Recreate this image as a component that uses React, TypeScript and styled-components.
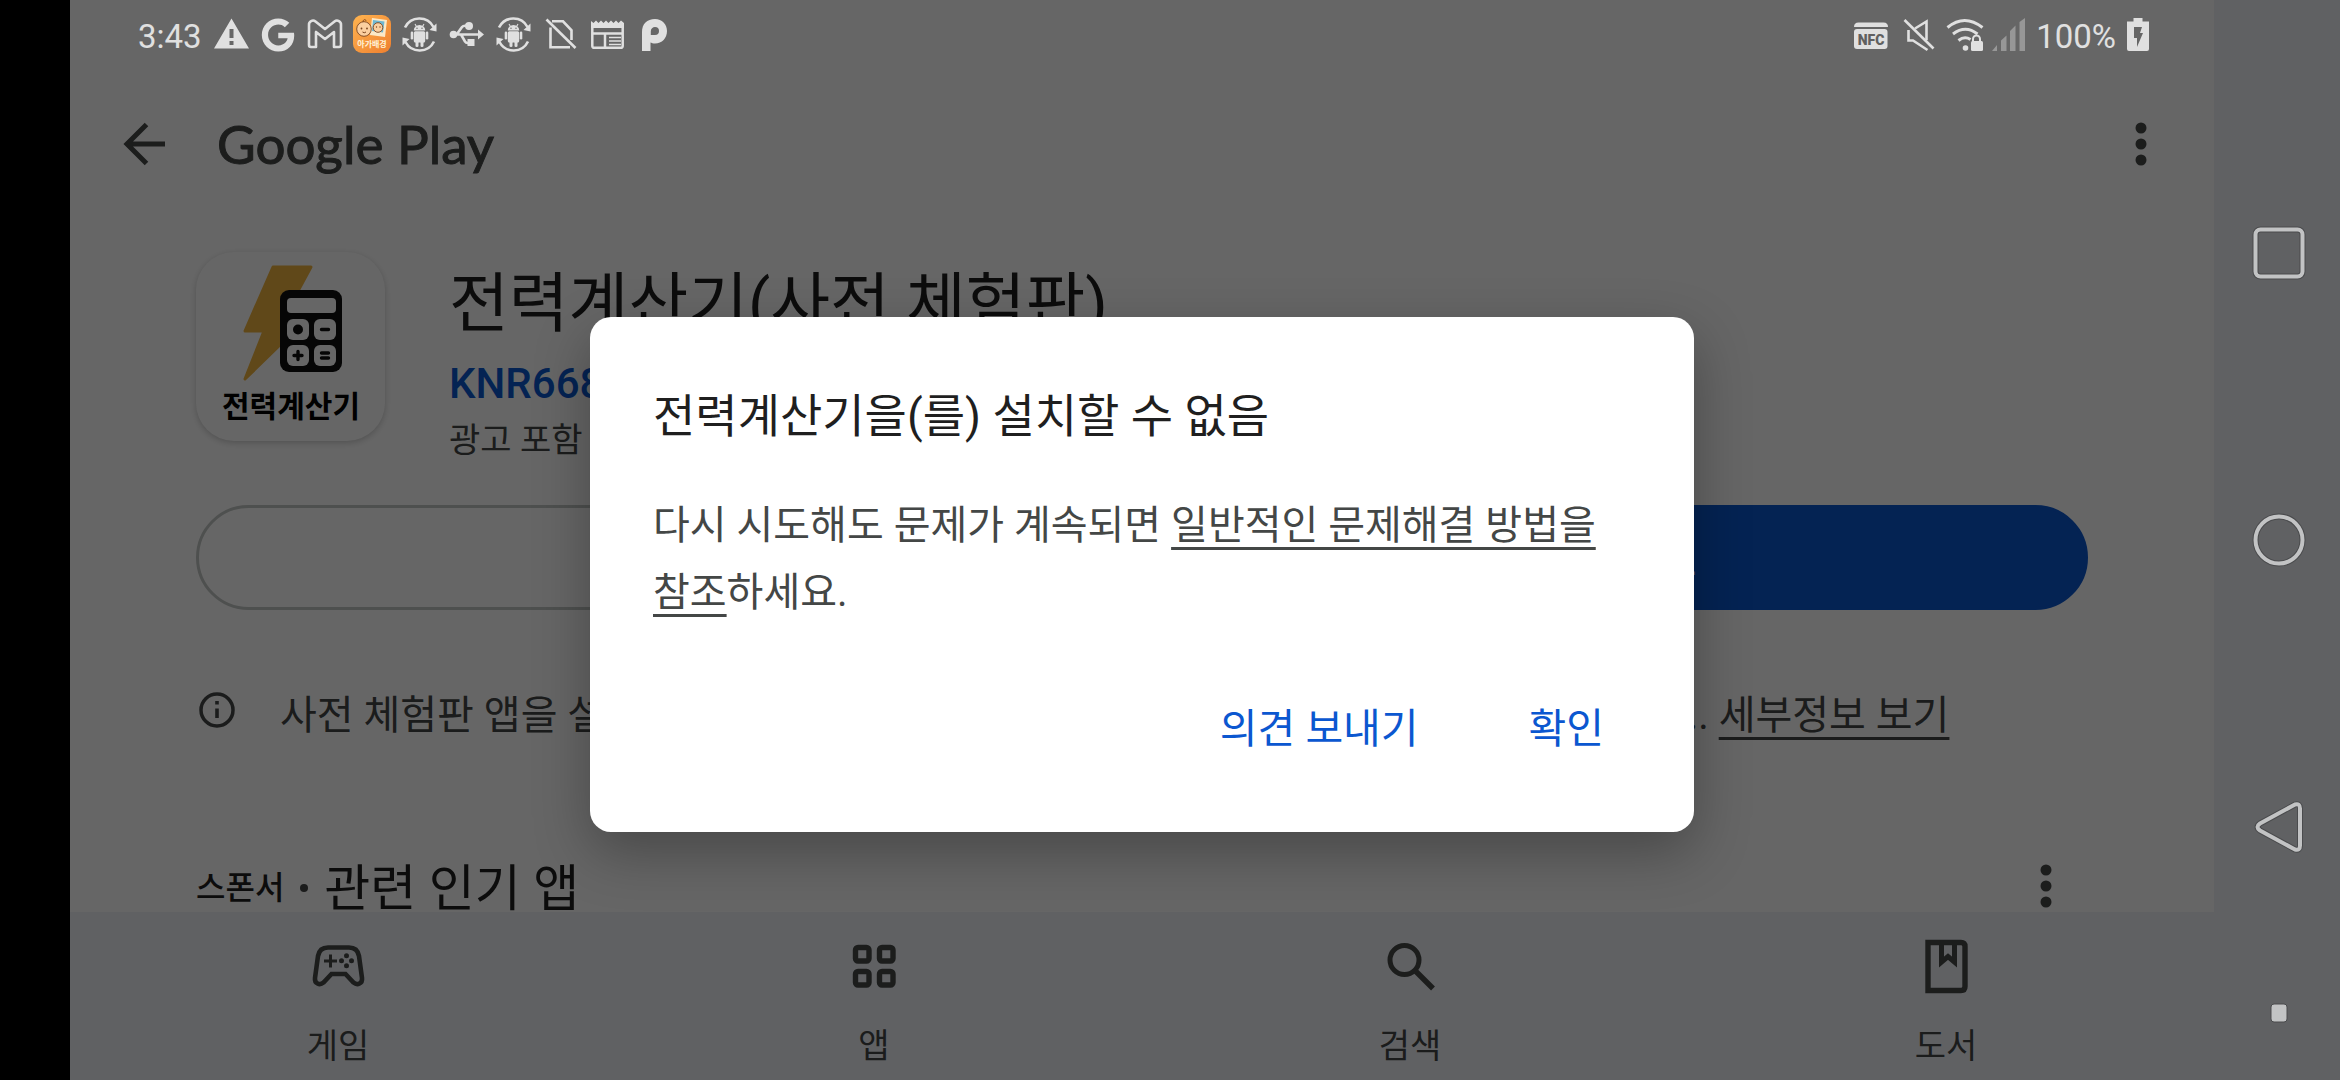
import React from "react";
import styled, { createGlobalStyle } from "styled-components";
import { FaGoogle } from "react-icons/fa";

const sans = `Roboto, "Noto Sans CJK KR", sans-serif`;
const kr = `"Noto Sans CJK KR", sans-serif`;
const light = "#e0e0e0";
const ink = "#444746";
const strong = "#1f1f1f";
const blue = "#0b57d0";
const key = "#c2c3c4";

const GlobalStyle = createGlobalStyle`
  *, *::before, *::after { box-sizing: border-box; }
  body { margin: 0; background: #000; font-family: ${sans}; word-break: keep-all; }
  button { border: 0; padding: 0; margin: 0; background: none; font-family: inherit; color: inherit; cursor: pointer; }
  h1, h2, p { margin: 0; font-weight: 400; }
  svg { display: block; flex: none; }
`;

const Screen = styled.div`
  position: relative;
  display: grid;
  grid-template-columns: 70px minmax(0, 1fr) 126px;
  height: 100vh;
  min-height: 900px;
  overflow: hidden;
`;

const Cutout = styled.div`
  background: #000;
`;

const AppArea = styled.div`
  display: flex;
  flex-direction: column;
  min-height: 0;
  background: #fff;
`;

const StatusBar = styled.header`
  position: relative;
  z-index: 2;
  flex: none;
  display: flex;
  align-items: center;
  justify-content: space-between;
  height: 69px;
  padding: 0 65px 0 66px;
  color: ${light};
`;

const StatusGroup = styled.div<{ $gap: number }>`
  display: flex;
  align-items: center;
  gap: ${(p) => p.$gap}px;
`;

const StatusText = styled.span`
  font-size: 33px;
  line-height: 40px;
  padding: 4px 2px 0;
`;

const TopBar = styled.div`
  flex: none;
  display: flex;
  align-items: center;
  height: 150px;
  padding: 0 42px;
  color: #464948;
`;

const IconButton = styled.button`
  display: grid;
  place-items: center;
  width: 63px;
  height: 63px;
`;

const Wordmark = styled.span`
  flex: 1;
  margin-left: 42px;
  font-family: Lato, sans-serif;
  font-size: 53px;
  line-height: 62px;
  -webkit-text-stroke: 1px currentColor;
`;

const Content = styled.main`
  flex: 1;
  min-height: 0;
  overflow: hidden;
  padding: 33px 126px 0;
`;

const AppHeader = styled.section`
  display: flex;
  align-items: flex-start;
  gap: 64px;
`;

const AppTile = styled.div`
  width: 189px;
  height: 189px;
  border-radius: 38px;
  background: #fff;
  box-shadow: 0 2px 6px rgba(0, 0, 0, 0.2);
`;

const AppMeta = styled.div`
  display: flex;
  flex-direction: column;
  padding-top: 8px;
  white-space: nowrap;
`;

const AppTitle = styled.h1`
  font-size: 65px;
  line-height: 88px;
  color: ${strong};
`;

const Developer = styled.a`
  font-size: 42px;
  font-weight: 500;
  line-height: 72px;
  color: ${blue};
  text-decoration: none;
`;

const Note = styled.p`
  font-size: 34px;
  line-height: 40px;
  color: ${ink};
`;

const Actions = styled.div`
  display: flex;
  gap: 24px;
  margin-top: 45px;
`;

const ActionButton = styled.button<{ $filled?: boolean }>`
  flex: 1;
  height: 105px;
  border-radius: 53px;
  border: 3px solid ${(p) => (p.$filled ? blue : "#c4c7c5")};
  background: ${(p) => (p.$filled ? blue : "transparent")};
  color: ${(p) => (p.$filled ? "#fff" : blue)};
  font-size: 41px;
  font-weight: 500;
`;

const InfoRow = styled.div`
  display: flex;
  align-items: flex-start;
  gap: 42px;
  margin-top: 72px;
  color: ${ink};
`;

const InfoText = styled.p`
  font-size: 40px;
  line-height: 67px;
  white-space: nowrap;
`;

const TextLink = styled.a`
  color: inherit;
  text-decoration: underline;
  text-decoration-thickness: 3px;
  text-underline-offset: 8px;
`;

const SectionHead = styled.div`
  display: flex;
  align-items: flex-start;
  margin-top: 115px;
  height: 48px;
  color: ${strong};
`;

const Sponsor = styled.span`
  font-size: 32px;
  font-weight: 500;
  line-height: 48px;
`;

const Bullet = styled.i`
  align-self: center;
  width: 8px;
  height: 8px;
  margin: 0 16px;
  border-radius: 50%;
  background: ${ink};
`;

const SectionTitle = styled.h2`
  flex: 1;
  align-self: flex-end;
  font-size: 50px;
  line-height: 46px;
`;

const SectionMore = styled(IconButton)`
  height: 44px;
  margin-right: 11px;
  color: #464948;
`;

const BottomNav = styled.nav`
  flex: none;
  display: flex;
  height: 168px;
  background: #f0f3f8;
  color: #464948;
`;

const NavItem = styled.button`
  flex: 1;
  display: flex;
  flex-direction: column;
  align-items: center;
  padding-top: 23px;
  font-size: 34px;
  line-height: 48px;
  gap: 24px;
  color: ${ink};
`;

const SystemNav = styled.nav`
  position: relative;
  z-index: 2;
  display: flex;
  flex-direction: column;
  padding: 109px 0 24px 3px;
  background: #606163;
`;

const SystemKey = styled.button<{ $small?: boolean }>`
  flex: ${(p) => (p.$small ? "0 0 86px" : "1")};
  display: grid;
  place-items: center;
`;

const Scrim = styled.div`
  position: absolute;
  inset: 0;
  z-index: 1;
  background: rgba(0, 0, 0, 0.6);
`;

const DialogLayer = styled.div`
  position: absolute;
  inset: 0;
  z-index: 3;
  display: grid;
  place-items: center;
  padding: 69px 126px 0 70px;
  pointer-events: none;
`;

const Dialog = styled.div`
  width: 1104px;
  max-width: 90%;
  padding: 64px 63px 57px;
  border-radius: 21px;
  background: #fff;
  box-shadow: 0 20px 56px rgba(0, 0, 0, 0.3);
  pointer-events: auto;
`;

const DialogTitle = styled.h2`
  font-size: 46px;
  line-height: 70px;
  color: ${strong};
`;

const DialogBody = styled.p`
  margin-top: 41px;
  font-size: 40px;
  line-height: 67px;
  color: ${ink};
`;

const DialogActions = styled.div`
  display: flex;
  justify-content: flex-end;
  gap: 56px;
  margin-top: 49px;
`;

const DialogButton = styled.button`
  height: 100px;
  padding: 0 27px;
  font-size: 41px;
  color: ${blue};
`;

const Glyph = ({ w = 40, children }: { w?: number; children: React.ReactNode }) => (
  <svg width={w} height={39} viewBox={`0 0 ${w} 39`} fill="currentColor" aria-hidden>
    {children}
  </svg>
);

const Warning = () => (
  <Glyph>
    <path fillRule="evenodd" d="M20.500 3.500 38 33.500H3zM18.500 14v9h4v-9zm0 12v4h4v-4z" />
  </Glyph>
);

const GoogleSlot = styled.span`
  display: grid;
  place-items: center;
  width: 40px;
  height: 39px;
`;

const GoogleMark = () => (
  <GoogleSlot>
    <FaGoogle size={34} />
  </GoogleSlot>
);

const Mail = () => (
  <Glyph>
    <path
      d="M4 10a4 4 0 0 1 6.500-3.500L20 14l9.500-7.500A4 4 0 0 1 36 10v20a2 2 0 0 1-2 2h-5V17l-9 7-9-7v15H6a2 2 0 0 1-2-2z"
      fill="none"
      stroke="currentColor"
      strokeWidth="2.600"
      strokeLinejoin="round"
    />
  </Glyph>
);

const BabyApp = () => (
  <Glyph>
    <defs>
      <linearGradient id="baby" x1="0" y1="0" x2="1" y2="1">
        <stop offset="0" stopColor="#ffb450" />
        <stop offset="1" stopColor="#ee7f2f" />
      </linearGradient>
    </defs>
    <rect x="1" y="0" width="38" height="38" rx="9" fill="url(#baby)" />
    <path d="M20 3l15 2-2 17-15-2z" fill="#fbe9c8" />
    <path d="M21 5l11.500 1.500-1.500 11-11-1.500z" fill="#6fb8d3" />
    <g fill="#fbcf9f" stroke="#7a4520" strokeWidth="0.900">
      <circle cx="26" cy="12.500" r="4.800" />
      <circle cx="12" cy="14" r="7.300" />
      <path d="M11 7c0-3 3-3 3-1" fill="none" />
    </g>
    <g fill="#7a4520">
      <circle cx="9.500" cy="13.500" r="0.900" />
      <circle cx="15" cy="13.500" r="0.900" />
      <circle cx="24.500" cy="12" r="0.700" />
      <circle cx="28" cy="12" r="0.700" />
    </g>
    <path d="M10.500 17q1.800 1.500 3.500 0" fill="none" stroke="#7a4520" />
    <text x="20" y="32" textAnchor="middle" fontFamily={kr} fontSize="8" fontWeight="700" fill="#fff3d8">
      아가배경
    </text>
  </Glyph>
);

const AndroidSync = () => (
  <Glyph>
    <g fill="none" stroke="currentColor" strokeWidth="2.600">
      <path d="M6 12.500A16 16 0 0 1 34.500 12" />
      <path d="M35 26.500A16 16 0 0 1 6.500 27" />
    </g>
    <path d="M37.500 8.500v8l-7-1.500zM3.500 30.500v-8l7 1.500z" />
    <path d="M14.800 15.500a5.700 5.500 0 0 1 11.400 0z" />
    <path d="M16 9l1.800 3m7.200-3-1.800 3" stroke="currentColor" strokeWidth="1.100" />
    <rect x="14.800" y="16.200" width="11.400" height="11.300" rx="1.500" />
    <rect x="11.700" y="16.500" width="2.500" height="8" rx="1.200" />
    <rect x="26.800" y="16.500" width="2.500" height="8" rx="1.200" />
    <rect x="16.500" y="26" width="3" height="6" rx="1.300" />
    <rect x="21.500" y="26" width="3" height="6" rx="1.300" />
    <circle cx="18" cy="13.200" r="0.700" fill="#666" />
    <circle cx="23" cy="13.200" r="0.700" fill="#666" />
  </Glyph>
);

const Usb = () => (
  <Glyph>
    <circle cx="7.500" cy="19.500" r="3.800" />
    <circle cx="23" cy="11" r="4" />
    <rect x="21.500" y="24" width="7" height="7" />
    <path d="M32 14.500v10l6-5z" />
    <path
      d="M8 19.500h26M11 19l5-7q1-1.300 3-1.300h4M15 19.500l4 7q1 1.500 2.500 1.500h2"
      fill="none"
      stroke="currentColor"
      strokeWidth="2.600"
    />
  </Glyph>
);

const NoSim = () => (
  <Glyph>
    <g fill="none" stroke="currentColor" strokeWidth="2.600">
      <path d="M6.500 4.500 35.500 33" />
      <path d="M10.500 12.500v19.700H30M12 6.300h11l8.500 9V25" />
    </g>
  </Glyph>
);

const News = () => (
  <Glyph>
    <path d="M4 6l2.500 2L9 5.500 11.500 8 14 5.500 16.500 8 19 5.500 21.500 8 24 5.500 26.500 8 29 5.500 31.500 8 34 5.500 37 8v5H4z" />
    <path d="M5.300 12v19a1.800 1.800 0 0 0 1.800 1.800h26.800a1.800 1.800 0 0 0 1.800-1.800V12M5 18.500h30M18 18.500V32" fill="none" stroke="currentColor" strokeWidth="2.500" />
    <path d="M22 22.500h12M22 26h12M22 29.500h12" stroke="currentColor" strokeWidth="1.700" />
  </Glyph>
);

const ParkMark = () => (
  <Glyph>
    <path
      fillRule="evenodd"
      d="M8 36V17C8 9 13 4 21 4c7 0 12 5 12 12s-5 12.500-12 12.500c-2 0-3.500-.5-4.500-1V36zM21 12a4.200 4.200 0 0 0-4.200 4.200v3.800H21a4 4 0 0 0 0-8z"
    />
  </Glyph>
);

const Nfc = () => (
  <Glyph>
    <path d="M3 12q0-4.500 4.500-4.500h25q4.500 0 4.500 4.500z" />
    <rect x="3" y="14" width="33.500" height="20" rx="3" />
    <text x="20" y="29.500" textAnchor="middle" fontFamily="Roboto, sans-serif" fontSize="14" fontWeight="900" fill="#606060">
      NFC
    </text>
  </Glyph>
);

const Mute = () => (
  <Glyph>
    <g fill="none" stroke="currentColor" strokeWidth="2.600">
      <path d="M6.500 5 35.500 33.500" />
      <path d="M17 13.500 28.500 6.500V25M10.500 15v10.500H15L29.500 35" />
    </g>
  </Glyph>
);

const WifiLock = () => (
  <Glyph>
    <g fill="none" stroke="currentColor" strokeWidth="3">
      <path d="M2.500 12.500q17-14 35 0" />
      <path d="M8 19q12.500-9.500 24.500 0" />
      <path d="M13.500 25.500q6-5 12-1" />
      <path d="M28 28v-4a3.500 3.500 0 0 1 7 0v4" strokeWidth="2" />
    </g>
    <circle cx="20.500" cy="33" r="2.800" />
    <rect x="26" y="26" width="12" height="10" rx="1.500" />
  </Glyph>
);

const Signal = () => (
  <Glyph w={33}>
    <path d="M0 36l5-6v6zM9 36V25.500l5.500-5V36zM18 36V16l5.500-5.500V36zM27.500 36V7L33 3v33z" opacity="0.400" />
  </Glyph>
);

const Battery = () => (
  <Glyph w={22}>
    <path fillRule="evenodd" d="M6.500 3h9v3.500H22V34a2 2 0 0 1-2 2H2a2 2 0 0 1-2-2V6.500h6.500zM7 12v11h3v9l6-14h-3l2-6z" />
  </Glyph>
);

const MoreDots = () => (
  <svg width={12} height={44} viewBox="0 0 12 44" fill="currentColor" aria-hidden>
    <circle cx="6" cy="6" r="5.500" />
    <circle cx="6" cy="22" r="5.500" />
    <circle cx="6" cy="38" r="5.500" />
  </svg>
);

const BackArrow = () => (
  <svg width={44} height={44} viewBox="0 0 44 44" fill="none" stroke="currentColor" strokeWidth="5" aria-hidden>
    <path d="M43 22H5M24.500 2.500 5 22l19.500 19.500" />
  </svg>
);

const CalculatorArt = () => (
  <svg width={189} height={189} viewBox="0 0 189 189" aria-hidden>
    <path
      d="M77 15h38L95 52l-8 38-38 37 19-48H49z"
      fill="#f0b440"
      stroke="#f0b440"
      strokeWidth="3"
      strokeLinejoin="round"
    />
    <rect x="84" y="38" width="62" height="82" rx="9" fill="#111" />
    <g fill="#fff">
      <rect x="91" y="46" width="49" height="15" rx="4" />
      <rect x="91" y="67" width="22" height="21" rx="6" />
      <rect x="118" y="67" width="22" height="21" rx="6" />
      <rect x="91" y="93" width="22" height="21" rx="6" />
      <rect x="118" y="93" width="22" height="21" rx="6" />
    </g>
    <circle cx="102" cy="77.500" r="5" fill="#111" />
    <path d="M125.500 77.500h7M102 99.500v8M98 103.500h8M125.500 101h7M125.500 106h7" stroke="#111" strokeWidth="3.400" strokeLinecap="round" />
    <text x="95" y="165" textAnchor="middle" fontFamily={kr} fontSize="30" fontWeight="700" fill="#000">
      전력계산기
    </text>
  </svg>
);

const InfoIcon = () => (
  <svg width={42} height={56} viewBox="0 0 42 56" fill="none" stroke="currentColor" aria-hidden>
    <circle cx="21" cy="28" r="16" strokeWidth="3.500" />
    <path d="M21 26.500V36M21 19v3.500" strokeWidth="3.600" />
  </svg>
);

const NavSvg = ({ children }: { children: React.ReactNode }) => (
  <svg width={63} height={63} viewBox="0 0 63 63" fill="none" stroke="#464948" strokeWidth="5" aria-hidden>
    {children}
  </svg>
);

const navItems = [
  {
    label: "게임",
    icon: (
      <NavSvg>
        <path d="M21 12.500h21q8.500 0 10 8.500l3 22q.5 4-2.500 5.500t-6-1L38.500 39h-14l-8 8.500q-3 2.500-6 1T8 43l3-22q1.500-8.500 10-8.500z" strokeWidth="4.600" />
        <path d="M23.500 19.500v13M17 26h13" strokeWidth="3" />
        <g fill="#464948" stroke="none">
          <circle cx="39.500" cy="20.800" r="2.500" />
          <circle cx="39.500" cy="30.800" r="2.500" />
          <circle cx="34.500" cy="25.800" r="2.500" />
          <circle cx="44.500" cy="25.800" r="2.500" />
        </g>
      </NavSvg>
    ),
  },
  {
    label: "앱",
    icon: (
      <NavSvg>
        {[12.5, 36.5].map((y) =>
          [12.5, 36.5].map((x) => <rect key={`${x}-${y}`} x={x} y={y} width="13.500" height="13.500" rx="2.500" strokeWidth="5.400" />)
        )}
      </NavSvg>
    ),
  },
  {
    label: "검색",
    icon: (
      <NavSvg>
        <circle cx="25.500" cy="25" r="14.500" />
        <path d="M36 35.500 54 53.500" strokeWidth="5.500" />
      </NavSvg>
    ),
  },
  {
    label: "도서",
    icon: (
      <NavSvg>
        <path d="M13 7.500h33q4 0 4 4v40q0 4-4 4H13z" strokeWidth="5.400" />
        <path d="M26.500 8v19l6.500-5.500 6.500 5.500V8" strokeWidth="5" />
      </NavSvg>
    ),
  },
];

const KeySvg = ({ children }: { children: React.ReactNode }) => (
  <svg width={54} height={54} viewBox="0 0 54 54" fill="none" strokeLinejoin="round" aria-hidden>
    <g stroke="#4a4b4d" strokeWidth="6">{children}</g>
    <g stroke={key} strokeWidth="4">{children}</g>
  </svg>
);

export default function App() {
  return (
    <>
      <GlobalStyle />
      <Screen>
        <Cutout />
        <AppArea>
          <StatusBar>
            <StatusGroup $gap={7}>
              <StatusText>3:43</StatusText>
              <Warning />
              <GoogleMark />
              <Mail />
              <BabyApp />
              <AndroidSync />
              <Usb />
              <AndroidSync />
              <NoSim />
              <News />
              <ParkMark />
            </StatusGroup>
            <StatusGroup $gap={9}>
              <StatusGroup $gap={7}>
                <Nfc />
                <Mute />
                <WifiLock />
                <Signal />
              </StatusGroup>
              <StatusText>100%</StatusText>
              <Battery />
            </StatusGroup>
          </StatusBar>
          <TopBar>
            <IconButton aria-label="뒤로">
              <BackArrow />
            </IconButton>
            <Wordmark>Google Play</Wordmark>
            <IconButton aria-label="옵션 더보기">
              <MoreDots />
            </IconButton>
          </TopBar>
          <Content>
            <AppHeader>
              <AppTile>
                <CalculatorArt />
              </AppTile>
              <AppMeta>
                <AppTitle>전력계산기(사전 체험판)</AppTitle>
                <Developer href="#developer">KNR668</Developer>
                <Note>광고 포함</Note>
              </AppMeta>
            </AppHeader>
            <Actions>
              <ActionButton>제거</ActionButton>
              <ActionButton $filled>업데이트</ActionButton>
            </Actions>
            <InfoRow>
              <InfoIcon />
              <InfoText>
                사전 체험판 앱을 설치하면 앱 사용에 관한 특정 데이터가 수집되어 개발자에게 공유됨... <TextLink href="#details">세부정보 보기</TextLink>
              </InfoText>
            </InfoRow>
            <SectionHead>
              <Sponsor>스폰서</Sponsor>
              <Bullet />
              <SectionTitle>관련 인기 앱</SectionTitle>
              <SectionMore aria-label="더보기">
                <MoreDots />
              </SectionMore>
            </SectionHead>
          </Content>
          <BottomNav>
            {navItems.map((item) => (
              <NavItem key={item.label}>
                {item.icon}
                <span>{item.label}</span>
              </NavItem>
            ))}
          </BottomNav>
        </AppArea>
        <SystemNav>
          <SystemKey aria-label="최근 앱">
            <KeySvg>
              <rect x="3.500" y="3.500" width="47" height="47" rx="5" />
            </KeySvg>
          </SystemKey>
          <SystemKey aria-label="홈">
            <KeySvg>
              <circle cx="27" cy="27" r="23.500" />
            </KeySvg>
          </SystemKey>
          <SystemKey aria-label="이전">
            <KeySvg>
              <path d="M43 4.500 8 23.500q-5 3.500 0 7L43 49.500q5 1.500 5-4v-37q0-5.500-5-4z" />
            </KeySvg>
          </SystemKey>
          <SystemKey $small aria-label="탐색 메뉴 숨기기">
            <svg width={18} height={20} viewBox="0 0 18 20" aria-hidden>
              <rect x="1" y="1" width="16" height="18" rx="3" fill={key} stroke="#4a4b4d" />
            </svg>
          </SystemKey>
        </SystemNav>
        <Scrim />
        <DialogLayer>
          <Dialog role="dialog" aria-modal="true" aria-labelledby="dialog-title">
            <DialogTitle id="dialog-title">전력계산기을(를) 설치할 수 없음</DialogTitle>
            <DialogBody>
              다시 시도해도 문제가 계속되면 <TextLink href="#help">일반적인 문제해결 방법을 참조</TextLink>하세요.
            </DialogBody>
            <DialogActions>
              <DialogButton>의견 보내기</DialogButton>
              <DialogButton>확인</DialogButton>
            </DialogActions>
          </Dialog>
        </DialogLayer>
      </Screen>
    </>
  );
}
